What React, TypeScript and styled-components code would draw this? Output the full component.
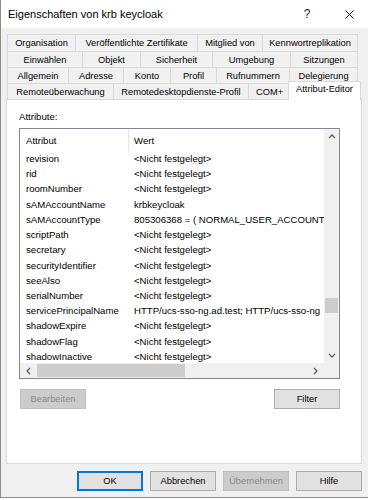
import * as React from 'react'
import styled, { createGlobalStyle } from 'styled-components'

const GlobalStyle = createGlobalStyle`
  html, body {
    margin: 0;
    padding: 0;
    background: #ffffff;
  }
`

const Window = styled.div`
  width: 368px;
  height: 498px;
  box-sizing: border-box;
  border-left: 1px solid #8c8c8c;
  border-bottom: 1px solid #8c8c8c;
  background: #f0f0f0;
  display: flex;
  flex-direction: column;
  font-family: 'Liberation Sans', Arial, sans-serif;
  color: #000;
  overflow: hidden;
`
const TitleBar = styled.div`
  height: 28px;
  flex-shrink: 0;
  background: #ffffff;
  display: flex;
  align-items: center;
  padding-left: 7px;
`
const Title = styled.div`
  flex: 1;
  font-size: 11px;
  white-space: nowrap;
`
const TitleButton = styled.div<{ $w: number; $gap?: number }>`
  width: ${({ $w }) => $w}px;
  height: 28px;
  margin-right: ${({ $gap }) => $gap || 0}px;
  display: flex;
  align-items: center;
  justify-content: center;
  font-size: 12px;
  color: #1a1a1a;
`
const Tabs = styled.div`
  margin-top: 6px;
  padding-left: 6px;
  display: flex;
  flex-direction: column;
`
const TabRow = styled.div<{ $h: number }>`
  display: flex;
  height: ${({ $h }) => $h}px;
  align-items: flex-start;
`
const Tab = styled.div<{ $w: number; $h: number; $active?: boolean; $last?: boolean }>`
  box-sizing: border-box;
  flex-shrink: 0;
  width: ${({ $w }) => $w}px;
  height: ${({ $h, $active }) => ($active ? $h + 3 : $h)}px;
  margin-top: ${({ $active }) => ($active ? -2 : 0)}px;
  margin-left: ${({ $active }) => ($active ? -2 : 0)}px;
  border-top: 1px solid #d9d9d9;
  border-left: 1px solid #d9d9d9;
  border-right: ${({ $last }) => ($last ? '1px solid #d9d9d9' : 'none')};
  background: ${({ $active }) => ($active ? '#ffffff' : '#f0f0f0')};
  position: ${({ $active }) => ($active ? 'relative' : 'static')};
  z-index: ${({ $active }) => ($active ? 1 : 'auto')};
  display: flex;
  align-items: ${({ $active }) => ($active ? 'flex-start' : 'center')};
  padding-top: ${({ $active }) => ($active ? 2 : 0)}px;
  justify-content: center;
  font-size: 9.3px;
  white-space: nowrap;
`
const Panel = styled.div`
  box-sizing: border-box;
  margin-left: 5px;
  width: 356px;
  height: 365px;
  flex-shrink: 0;
  background: #ffffff;
  border: 1px solid #d9d9d9;
  padding: 11px 0 0 12px;
  display: flex;
  flex-direction: column;
`
const Label = styled.div`
  font-size: 9.6px;
  line-height: 12px;
  height: 12px;
  margin-bottom: 5px;
`
const ListBox = styled.div`
  box-sizing: border-box;
  width: 321px;
  height: 251px;
  border: 1px solid #828790;
  display: grid;
  grid-template-columns: 1fr 15px;
  grid-template-rows: 1fr 15px;
`
const ListContent = styled.div`
  overflow: hidden;
  display: flex;
  flex-direction: column;
  background: #ffffff;
`
const HeaderRow = styled.div`
  display: grid;
  grid-template-columns: 108px 1fr;
  height: 22px;
  flex-shrink: 0;
  font-size: 9.6px;
`
const HeaderCell = styled.div<{ $sep?: boolean }>`
  display: flex;
  align-items: center;
  padding-left: ${({ $sep }) => ($sep ? 5 : 6)}px;
  border-left: ${({ $sep }) => ($sep ? '1px solid #e5e5e5' : 'none')};
`
const Row = styled.div`
  display: grid;
  grid-template-columns: 108px 1fr;
  height: 15.23px;
  line-height: 15.23px;
  flex-shrink: 0;
  font-size: 9.6px;
  white-space: nowrap;
`
const Cell = styled.div`
  padding-left: 6px;
  overflow: hidden;
`
const VScroll = styled.div`
  background: #f0f0f0;
  display: flex;
  flex-direction: column;
`
const ScrollArrow = styled.div<{ $w: number; $h: number }>`
  width: ${({ $w }) => $w}px;
  height: ${({ $h }) => $h}px;
  flex-shrink: 0;
  display: flex;
  align-items: center;
  justify-content: center;
`
const VTrack = styled.div`
  flex: 1;
  display: flex;
  flex-direction: column;
`
const VThumb = styled.div<{ $top: number }>`
  margin: ${({ $top }) => $top}px 1px 0;
  height: 15px;
  background: #cdcdcd;
`
const HScroll = styled.div`
  background: #f0f0f0;
  display: flex;
`
const HTrack = styled.div`
  flex: 1;
  display: flex;
`
const HThumb = styled.div`
  width: 148px;
  margin: 1px 0;
  background: #cdcdcd;
`
const Corner = styled.div`
  background: #f0f0f0;
`
const ButtonRow = styled.div<{ $justify: string; $gap?: number }>`
  display: flex;
  justify-content: ${({ $justify }) => $justify};
  gap: ${({ $gap }) => $gap || 0}px;
`
const PanelButtons = styled(ButtonRow)`
  width: 321px;
  margin-top: 10px;
  padding-left: 1px;
  box-sizing: border-box;
`
const FooterButtons = styled(ButtonRow)`
  margin-top: 7px;
  padding-right: 6px;
`
const Button = styled.div<{ $disabled?: boolean; $default?: boolean }>`
  box-sizing: border-box;
  width: 66px;
  height: 20px;
  display: flex;
  align-items: center;
  justify-content: center;
  font-size: 9.3px;
  background: ${({ $disabled }) => ($disabled ? '#cccccc' : '#e1e1e1')};
  border: ${({ $default, $disabled }) =>
    $default ? '2px solid #0078d7' : $disabled ? '1px solid #bfbfbf' : '1px solid #adadad'};
  color: ${({ $disabled }) => ($disabled ? '#8a8a8a' : '#000')};
`

const Chevron = ({ dir }: { dir: 'up' | 'down' | 'left' | 'right' }) => {
  const pts = {
    up: '1,5 4,2 7,5',
    down: '1,2 4,5 7,2',
    left: '5,1 2,4 5,7',
    right: '2,1 5,4 2,7',
  }[dir]
  return (
    <svg width="8" height="8" viewBox="0 0 8 8">
      <polyline points={pts} fill="none" stroke="#606060" strokeWidth="1.3" />
    </svg>
  )
}

const tabRows: [string, number, boolean?][][] = [
  [['Organisation', 68], ['Veröffentlichte Zertifikate', 122], ['Mitglied von', 65], ['Kennwortreplikation', 96]],
  [['Einwählen', 75], ['Objekt', 58], ['Sicherheit', 72], ['Umgebung', 78], ['Sitzungen', 68]],
  [['Allgemein', 61], ['Adresse', 55], ['Konto', 47], ['Profil', 46], ['Rufnummern', 73], ['Delegierung', 69]],
  [['Remoteüberwachung', 106], ['Remotedesktopdienste-Profil', 135], ['COM+', 42], ['Attribut-Editor', 73, true]],
]

const NF = '<Nicht festgelegt>'
const attributes: [string, string][] = [
  ['revision', NF],
  ['rid', NF],
  ['roomNumber', NF],
  ['sAMAccountName', 'krbkeycloak'],
  ['sAMAccountType', '805306368 = ( NORMAL_USER_ACCOUNT'],
  ['scriptPath', NF],
  ['secretary', NF],
  ['securityIdentifier', NF],
  ['seeAlso', NF],
  ['serialNumber', NF],
  ['servicePrincipalName', 'HTTP/ucs-sso-ng.ad.test; HTTP/ucs-sso-ng'],
  ['shadowExpire', NF],
  ['shadowFlag', NF],
  ['shadowInactive', NF],
]

export default function App() {
  return (
    <>
      <GlobalStyle />
      <Window>
        <TitleBar>
          <Title>Eigenschaften von krb keycloak</Title>
          <TitleButton $w={36} $gap={5}>?</TitleButton>
          <TitleButton $w={38}>
            <svg width="9" height="9" viewBox="0 0 9 9">
              <path d="M0.5 0.5 L8.5 8.5 M8.5 0.5 L0.5 8.5" stroke="#1a1a1a" strokeWidth="1" />
            </svg>
          </TitleButton>
        </TitleBar>
        <Tabs>
          {tabRows.map((row, r) => (
            <TabRow key={r} $h={r === 0 ? 17 : 16}>
              {row.map(([label, w, active], i) => (
                <Tab key={label} $w={w} $h={r === 0 ? 17 : 16} $active={active} $last={i === row.length - 1}>
                  {label}
                </Tab>
              ))}
            </TabRow>
          ))}
        </Tabs>
        <Panel>
          <Label>Attribute:</Label>
          <ListBox>
            <ListContent>
              <HeaderRow>
                <HeaderCell>Attribut</HeaderCell>
                <HeaderCell $sep>Wert</HeaderCell>
              </HeaderRow>
              {attributes.map(([name, value]) => (
                <Row key={name}>
                  <Cell>{name}</Cell>
                  <Cell>{value}</Cell>
                </Row>
              ))}
            </ListContent>
            <VScroll>
              <ScrollArrow $w={15} $h={15}>
                <Chevron dir="up" />
              </ScrollArrow>
              <VTrack>
                <VThumb $top={154} />
              </VTrack>
              <ScrollArrow $w={15} $h={15}>
                <Chevron dir="down" />
              </ScrollArrow>
            </VScroll>
            <HScroll>
              <ScrollArrow $w={17} $h={15}>
                <Chevron dir="left" />
              </ScrollArrow>
              <HTrack>
                <HThumb />
              </HTrack>
              <ScrollArrow $w={17} $h={15}>
                <Chevron dir="right" />
              </ScrollArrow>
            </HScroll>
            <Corner />
          </ListBox>
          <PanelButtons $justify="space-between">
            <Button $disabled>Bearbeiten</Button>
            <Button>Filter</Button>
          </PanelButtons>
        </Panel>
        <FooterButtons $justify="flex-end" $gap={7}>
          <Button $default>OK</Button>
          <Button>Abbrechen</Button>
          <Button $disabled>Übernehmen</Button>
          <Button>Hilfe</Button>
        </FooterButtons>
      </Window>
    </>
  )
}
